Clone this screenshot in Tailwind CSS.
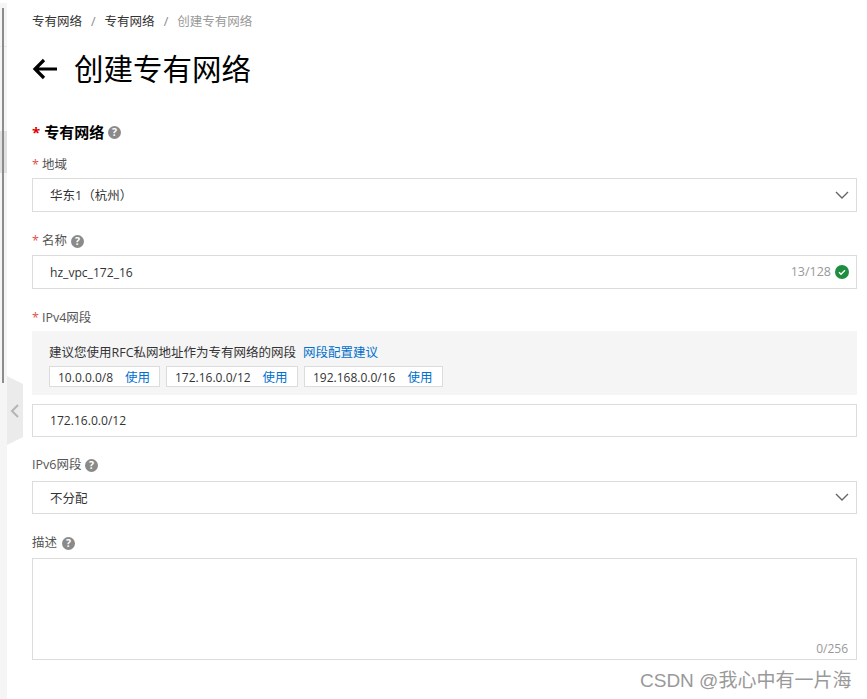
<!doctype html>
<html>
<head>
<meta charset="UTF-8">
<script src="https://cdn.jsdelivr.net/npm/@tailwindcss/browser@4"></script>
</head>
<body class="bg-white overflow-hidden font-['Open_Sans','Noto_Sans_CJK_SC',sans-serif] text-[12.5px] text-[#333]">
<div class="relative flex h-[699px] w-[867px]">
    <!-- left rail -->
    <aside class="relative mt-[3px] w-[7px] shrink-0 bg-[#f5f5f5]">
        <div class="absolute left-0 top-[43px] h-px w-full bg-[#e8e8e8]"></div>
        <div class="absolute left-0 top-[128px] h-[42px] w-full bg-[#e0e0e0]"></div>
        <div class="absolute left-[2px] top-[5px] h-[375px] w-[2px] bg-[#8c8c8c]"></div>
        <div class="absolute left-[7px] top-[373px] flex h-[69px] w-[16px] items-center justify-center bg-[#ebebeb] [clip-path:polygon(0_0,100%_8px,100%_61px,0_100%)]">
            <svg width="10" height="14" viewBox="0 0 10 14" fill="none" stroke="#b5b5b5" stroke-width="2"><path d="M8 1 2 7l6 6"/></svg>
        </div>
    </aside>

    <main class="ml-[25px] w-[825px]">
        <nav class="mt-[15px] flex h-[14px] items-center leading-[14px]">
            <span>专有网络</span><span class="mx-[9px] text-[#888]">/</span>
            <span>专有网络</span><span class="mx-[9px] text-[#888]">/</span>
            <span class="text-[#999]">创建专有网络</span>
        </nav>

        <div class="mt-[19px] flex h-[42px] items-center">
            <svg width="25" height="22" viewBox="0 0 25 22" fill="none" stroke="#000" stroke-width="3.2"><path d="M25 11H3M12 2l-9 9 9 9"/></svg>
            <h1 class="ml-[17px] text-[29.5px] leading-[42px] text-black">创建专有网络</h1>
        </div>

        <div class="mt-[32px] flex h-[20px] items-center text-[15px] font-bold text-black">
            <span class="mr-[4px] text-[#e00000]">*</span>专有网络
            <svg class="ml-[4px]" width="13" height="13" viewBox="0 0 13 13"><circle cx="6.5" cy="6.5" r="6.5" fill="#8a8a8a"/><text x="6.5" y="10.2" text-anchor="middle" font-size="10.5" font-weight="700" fill="#fff">?</text></svg>
        </div>

        <label class="mt-[13px] flex h-[20px] items-center text-[#555]"><span class="mr-[3px] text-[#e05050]">*</span>地域</label>
        <div class="mt-[3px] flex h-[34px] items-center justify-between border border-[#dcdcdc] pl-[17px] pr-[7px]">
            <span class="pt-[2px]">华东1（杭州）</span>
            <svg width="14" height="9" viewBox="0 0 14 9" fill="none" stroke="#666" stroke-width="1.4"><path d="M1 1l6 6 6-6"/></svg>
        </div>

        <label class="mt-[19px] flex h-[20px] items-center text-[#555]"><span class="mr-[3px] text-[#e05050]">*</span>名称
            <svg class="ml-[4px]" width="13" height="13" viewBox="0 0 13 13"><circle cx="6.5" cy="6.5" r="6.5" fill="#8a8a8a"/><text x="6.5" y="10.2" text-anchor="middle" font-size="10.5" font-weight="700" fill="#fff">?</text></svg>
        </label>
        <div class="mt-[4px] flex h-[34px] items-center justify-between border border-[#dcdcdc] pl-[17px] pr-[7px]">
            <span class="pt-[2px] text-[12.1px]">hz_vpc_172_16</span>
            <span class="flex items-center text-[#999]">13/128
                <svg class="ml-[4px]" width="14" height="14" viewBox="0 0 14 14"><circle cx="7" cy="7" r="7" fill="#1e8e3e"/><path d="M4 7.2l2 2 4-4" fill="none" stroke="#fff" stroke-width="1.4"/></svg>
            </span>
        </div>

        <label class="mt-[19px] flex h-[20px] items-center text-[#555]"><span class="mr-[3px] text-[#e05050]">*</span>IPv4网段</label>
        <div class="mt-[3px] h-[64px] bg-[#f5f5f5] pl-[17px] pt-[13px]">
            <div class="flex h-[18px] items-center"><span>建议您使用RFC私网地址作为专有网络的网段</span><a class="ml-[7px] text-[#0070cc]">网段配置建议</a></div>
            <div class="mt-[4px] flex gap-[6px]">
                <div class="flex h-[21px] w-[111px] items-center border border-[#dcdcdc] bg-white pl-[8px] pt-[3px]"><span class="text-[12px]">10.0.0.0/8</span><a class="ml-[12px] text-[#0070cc]">使用</a></div>
                <div class="flex h-[21px] w-[132px] items-center border border-[#dcdcdc] bg-white pl-[8px] pt-[3px]"><span class="text-[12px]">172.16.0.0/12</span><a class="ml-[12px] text-[#0070cc]">使用</a></div>
                <div class="flex h-[21px] w-[139px] items-center border border-[#dcdcdc] bg-white pl-[8px] pt-[3px]"><span class="text-[12px]">192.168.0.0/16</span><a class="ml-[12px] text-[#0070cc]">使用</a></div>
            </div>
        </div>
        <div class="mt-[9px] flex h-[33px] items-center border border-[#dcdcdc] pl-[17px] pt-[2px] text-[12.1px]">172.16.0.0/12</div>

        <label class="mt-[18px] flex h-[20px] items-center text-[#555]">IPv6网段
            <svg class="ml-[4px]" width="13" height="13" viewBox="0 0 13 13"><circle cx="6.5" cy="6.5" r="6.5" fill="#8a8a8a"/><text x="6.5" y="10.2" text-anchor="middle" font-size="10.5" font-weight="700" fill="#fff">?</text></svg>
        </label>
        <div class="mt-[6px] flex h-[33px] items-center justify-between border border-[#dcdcdc] pl-[17px] pr-[7px]">
            <span class="pt-[3px]">不分配</span>
            <svg width="14" height="9" viewBox="0 0 14 9" fill="none" stroke="#666" stroke-width="1.4"><path d="M1 1l6 6 6-6"/></svg>
        </div>

        <label class="mt-[18px] flex h-[20px] items-center pt-[2px] text-[#555]">描述
            <svg class="ml-[5px]" width="13" height="13" viewBox="0 0 13 13"><circle cx="6.5" cy="6.5" r="6.5" fill="#8a8a8a"/><text x="6.5" y="10.2" text-anchor="middle" font-size="10.5" font-weight="700" fill="#fff">?</text></svg>
        </label>
        <div class="relative mt-[6px] h-[102px] border border-[#dcdcdc]">
            <span class="absolute bottom-[1px] right-[8px] text-[12px] text-[#999]">0/256</span>
        </div>
    </main>

    <div class="absolute left-[640px] top-[668px] whitespace-nowrap font-['Liberation_Sans','Noto_Sans_CJK_SC',sans-serif] text-[19px] leading-[26px] text-[#999]">CSDN @我心中有一片海</div>
</div>
</body>
</html>
